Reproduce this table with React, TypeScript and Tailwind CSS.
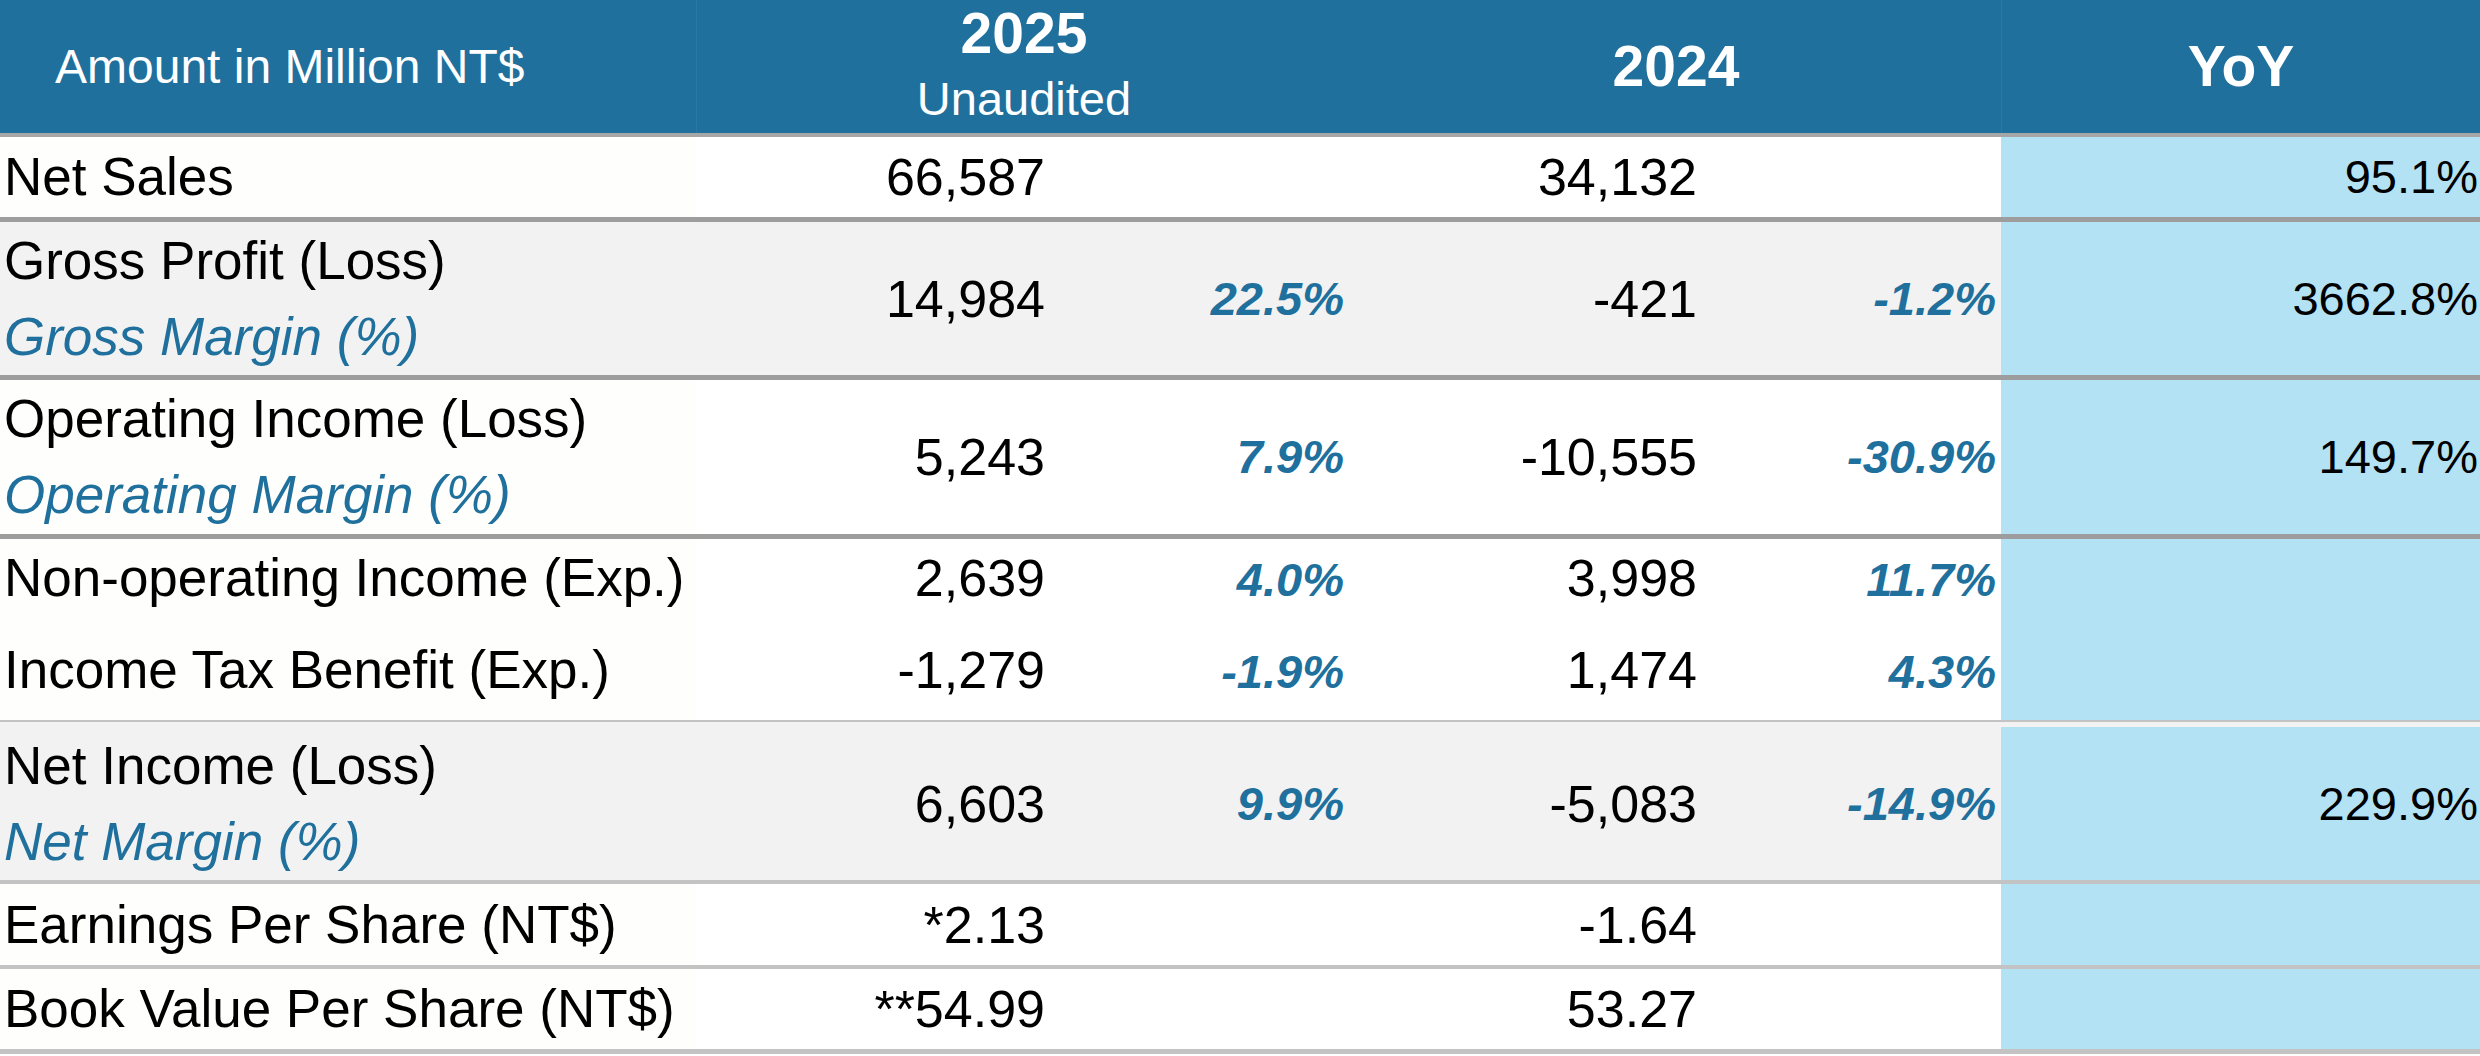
import React from "react";

const FONT = "font-['Liberation_Sans',Arial,sans-serif]";

type Row = {
    label: string;
    sub?: string;
    v25: string;
    p25?: string;
    v24: string;
    p24?: string;
    yoy?: string;
};

const labelBg = (gray: boolean) => (gray ? "bg-[#f2f2f2]" : "bg-[#fefefc]");
const cellBg = (gray: boolean) => (gray ? "bg-[#f2f2f2]" : "bg-white");

// one table line: label | 2025 value | 2025 % | 2024 value | 2024 % | YoY
const Cells = ({ row, gray, align }: { row: Row; gray: boolean; align: "center" | "top" }) => {
    const pos = align === "center" ? "items-center" : "items-start";
    const numPad = align === "center" ? "" : "pt-px";
    const pctPad = align === "center" ? "" : "pt-[3px]";
    return (
        <>
            <div className={`w-[696px] flex flex-col ${align === "center" ? "justify-center" : "justify-start pt-px"} pl-[4px] ${labelBg(gray)}`}>
                <span className="text-[53px] leading-[76px] text-black whitespace-nowrap">{row.label}</span>
                {row.sub && <span className="text-[53px] leading-[76px] italic text-[#20709e] whitespace-nowrap">{row.sub}</span>}
            </div>
            <div className={`w-[356px] flex ${pos} justify-end pr-[7px] ${numPad} ${cellBg(gray)}`}>
                <span className="text-[52px] leading-[76px] text-black">{row.v25}</span>
            </div>
            <div className={`w-[299px] flex ${pos} justify-end pr-[7px] ${pctPad} ${cellBg(gray)}`}>
                <span className="text-[47px] leading-[76px] font-bold italic text-[#20709e]">{row.p25}</span>
            </div>
            <div className={`w-[352px] flex ${pos} justify-end pr-[6px] ${numPad} ${cellBg(gray)}`}>
                <span className="text-[52px] leading-[76px] text-black">{row.v24}</span>
            </div>
            <div className={`w-[298px] flex ${pos} justify-end pr-[5px] ${pctPad} ${cellBg(gray)}`}>
                <span className="text-[47px] leading-[76px] font-bold italic text-[#20709e]">{row.p24}</span>
            </div>
            <div className={`flex-1 flex ${pos} justify-end pr-[2px] ${pctPad} bg-[#b3e2f5]`}>
                <span className="text-[47px] leading-[76px] text-black">{row.yoy}</span>
            </div>
        </>
    );
};

export default function App() {
    return (
        <div className={`w-[2480px] h-[1056px] bg-white overflow-hidden ${FONT}`}>
            {/* header */}
            <div className="flex h-[137px] border-b-4 border-[#a6a6a6] bg-[#20709e] text-white">
                <div className="w-[696px] flex items-center pl-[55px] text-[48px]">Amount in Million NT$</div>
                <div className="w-[655px] flex flex-col items-center justify-center border-l border-[#2c78a4]">
                    <span className="text-[57px] font-bold leading-[64px]">2025</span>
                    <span className="text-[47px] leading-[68px]">Unaudited</span>
                </div>
                <div className="w-[650px] flex items-center justify-center text-[57px] font-bold">2024</div>
                <div className="flex-1 flex items-center justify-center text-[57px] font-bold border-l border-[#2c78a4]">YoY</div>
            </div>

            <div className="flex h-[85px] border-b-[5px] border-[#9d9d9d]">
                <Cells gray={false} align="center" row={{ label: "Net Sales", v25: "66,587", v24: "34,132", yoy: "95.1%" }} />
            </div>

            <div className="flex h-[158px] border-b-[5px] border-[#9d9d9d]">
                <Cells
                    gray
                    align="center"
                    row={{ label: "Gross Profit (Loss)", sub: "Gross Margin (%)", v25: "14,984", p25: "22.5%", v24: "-421", p24: "-1.2%", yoy: "3662.8%" }}
                />
            </div>

            <div className="flex h-[159px] border-b-[5px] border-[#9d9d9d]">
                <Cells
                    gray={false}
                    align="center"
                    row={{ label: "Operating Income (Loss)", sub: "Operating Margin (%)", v25: "5,243", p25: "7.9%", v24: "-10,555", p24: "-30.9%", yoy: "149.7%" }}
                />
            </div>

            <div className="flex flex-col h-[183px] border-b-2 border-[#c3c3c3]">
                <div className="flex h-[92px]">
                    <Cells gray={false} align="top" row={{ label: "Non-operating Income (Exp.)", v25: "2,639", p25: "4.0%", v24: "3,998", p24: "11.7%" }} />
                </div>
                <div className="flex h-[89px]">
                    <Cells gray={false} align="top" row={{ label: "Income Tax Benefit (Exp.)", v25: "-1,279", p25: "-1.9%", v24: "1,474", p24: "4.3%" }} />
                </div>
            </div>

            <div className="flex h-[162px] pt-[5px] border-b-4 border-[#c3c3c3] bg-[#f2f2f2]">
                <Cells
                    gray
                    align="center"
                    row={{ label: "Net Income (Loss)", sub: "Net Margin (%)", v25: "6,603", p25: "9.9%", v24: "-5,083", p24: "-14.9%", yoy: "229.9%" }}
                />
            </div>

            <div className="flex h-[85px] border-b-4 border-[#c3c3c3]">
                <Cells gray={false} align="center" row={{ label: "Earnings Per Share (NT$)", v25: "*2.13", v24: "-1.64" }} />
            </div>

            <div className="flex h-[85px] border-b-[5px] border-[#c3c3c3]">
                <Cells gray={false} align="center" row={{ label: "Book Value Per Share (NT$)", v25: "**54.99", v24: "53.27" }} />
            </div>
        </div>
    );
}
